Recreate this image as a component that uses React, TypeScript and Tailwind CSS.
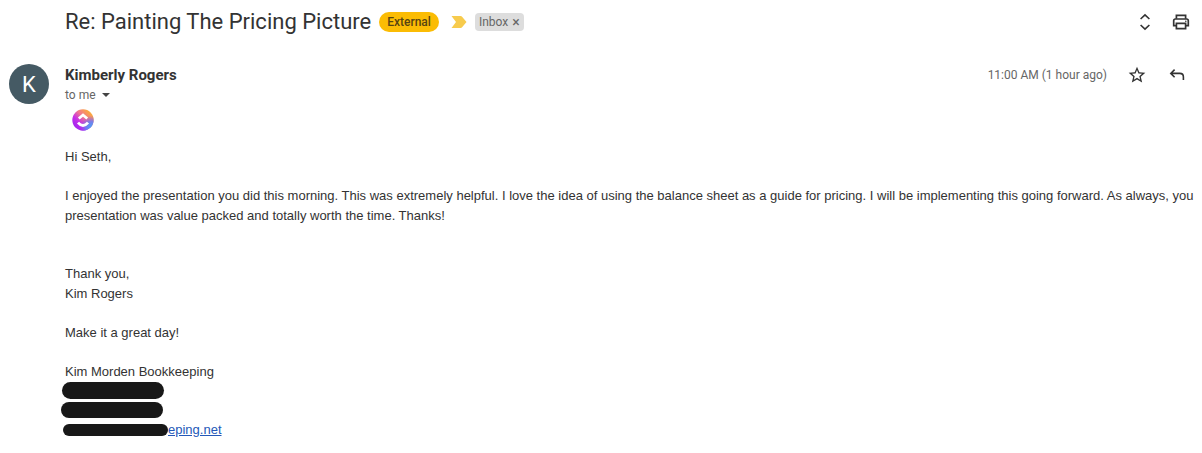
import { useState } from 'react'

const sans = "font-['Roboto','Liberation_Sans',sans-serif]"

const ImportantMarker = () => (
  <svg className="h-3 w-4 shrink-0" viewBox="0 0 16 12" fill="#f7cb4d" aria-hidden="true">
    <path d="M0.5 0H9.5Q10.6 0 11.3 0.9L15.5 6L11.3 11.1Q10.6 12 9.5 12H0.5L5 6Z" />
  </svg>
)

const ExpandIcon = () => (
  <svg className="h-5 w-5" viewBox="0 0 20 20" fill="none" stroke="#333" strokeWidth="1.6">
    <path d="M5.6 7L10 2.8L14.4 7M5.6 13L10 17.2L14.4 13" />
  </svg>
)

const PrintIcon = () => (
  <svg className="h-5 w-5" viewBox="0 0 20 20" fill="none" stroke="#333" strokeWidth="1.7">
    <path d="M5.4 6.7V3.4H14.6V6.7" />
    <path d="M5.4 13.6H2.7V8.7Q2.7 7 4.4 7H15.6Q17.3 7 17.3 8.7V13.6H14.6" />
    <path d="M5.4 11.4H14.6V16.6H5.4Z" />
    <circle cx="14.8" cy="9.2" r="0.8" fill="#333" stroke="none" />
  </svg>
)

const StarIcon = () => (
  <svg className="h-5 w-5" viewBox="0 0 24 24" fill="#333">
    <path d="M22 9.24l-7.19-.62L12 2 9.19 8.63 2 9.24l5.46 4.73L5.82 21 12 17.27 18.18 21l-1.63-7.03L22 9.24zM12 15.4l-3.76 2.27 1-4.28-3.32-2.88 4.38-.38L12 6.1l1.71 4.04 4.38.38-3.32 2.88 1 4.28L12 15.4z" />
  </svg>
)

const ReplyIcon = () => (
  <svg className="h-5 w-5" viewBox="0 0 20 20" fill="none" stroke="#333" strokeWidth="1.6">
    <path d="M7.6 4.6L3.8 8.4L7.6 12.2M3.8 8.4H12.8Q16.4 8.4 16.4 12V15" />
  </svg>
)

const ClickUpLogo = () => (
  <svg className="h-[22px] w-[22px]" viewBox="0 0 22 22">
    <defs>
      <linearGradient id="ring-left" x1="0" y1="1" x2="0.9" y2="0.1">
        <stop offset="0" stopColor="#8b1cf5" />
        <stop offset="0.4" stopColor="#c52fe8" />
        <stop offset="0.65" stopColor="#f2788d" />
        <stop offset="1" stopColor="#fdb52c" />
      </linearGradient>
      <radialGradient id="ring-right" cx="0.9" cy="0.85" r="0.55">
        <stop offset="0" stopColor="#45a5f7" />
        <stop offset="0.5" stopColor="#6c7df5" stopOpacity="0.9" />
        <stop offset="1" stopColor="#8b4cf5" stopOpacity="0" />
      </radialGradient>
    </defs>
    <circle cx="11" cy="11" r="10.7" fill="url(#ring-left)" />
    <circle cx="11" cy="11" r="10.7" fill="url(#ring-right)" />
    <path d="M6.8 9.6L11 5.9L15.2 9.6" fill="none" stroke="#fff" strokeWidth="2.6" />
    <path d="M6 13.6Q11 19.4 16 13.6" fill="none" stroke="#fff" strokeWidth="2.8" />
  </svg>
)

// A blank line between paragraphs
const Gap = () => <div className="h-[19px]" />

export default function App() {
  const [labelled, setLabelled] = useState(true)

  return (
    <main className={`bg-white pt-2 text-[#333] ${sans}`}>
      <header className="flex h-7 items-center pr-[11px] pl-[65px]">
        <h1 className="text-[22px] leading-7 whitespace-nowrap">Re: Painting The Pricing Picture</h1>
        <span className="ml-2 flex h-5 items-center rounded-full bg-[#fbbc04] px-2 text-[12px] font-medium text-[#574412]">
          External
        </span>
        <span className="ml-3 flex">
          <ImportantMarker />
        </span>
        {labelled && (
          <span className="ml-2 flex h-[18px] items-center gap-1 rounded bg-[#dddddd] px-1 text-[12px] text-[#666]">
            Inbox
            <button type="button" aria-label="Remove label Inbox" className="text-[14px]" onClick={() => setLabelled(false)}>
              ×
            </button>
          </span>
        )}
        <div className="ml-auto flex gap-4">
          <button type="button" aria-label="Expand all"><ExpandIcon /></button>
          <button type="button" aria-label="Print all"><PrintIcon /></button>
        </div>
      </header>

      <article className="mt-7 flex">
        <div className="w-[65px] shrink-0 pl-[9px]">
          <div className="flex h-10 w-10 items-center justify-center rounded-full bg-[#455a64] text-[22px] text-white">
            K
          </div>
        </div>
        <div className="min-w-0 flex-1">
          <div className="flex h-[22px] items-center pr-[15px]">
            <h2 className="text-[15px] font-bold">Kimberly Rogers</h2>
            <time className="ml-auto text-[12px] text-[#666]">11:00 AM (1 hour ago)</time>
            <button type="button" aria-label="Star" className="ml-5"><StarIcon /></button>
            <button type="button" aria-label="Reply" className="ml-5"><ReplyIcon /></button>
          </div>
          <button type="button" className="flex h-[18px] items-center gap-1.5 text-[12px] text-[#666]">
            to me
            <svg className="h-1 w-2" viewBox="0 0 8 4" fill="#444">
              <path d="M0 0H8L4 4Z" />
            </svg>
          </button>
          <div className="mt-[5px] flex pl-[7px]">
            <ClickUpLogo />
          </div>

          <div className="mt-4 pr-1 font-['Liberation_Sans',Arial,sans-serif] text-[13px] leading-5">
            <p>Hi Seth,</p>
            <Gap />
            <p>
              I enjoyed the presentation you did this morning. This was extremely helpful. I love the idea of using
              the balance sheet as a guide for pricing. I will be implementing this going forward. As always, you
              presentation was value packed and totally worth the time. Thanks!
            </p>
            <Gap />
            <Gap />
            <p>Thank you,</p>
            <p>Kim Rogers</p>
            <Gap />
            <p>Make it a great day!</p>
            <Gap />
            <p>Kim Morden Bookkeeping</p>
            <div className="-ml-1 flex flex-col items-start gap-[3px] pb-0.5">
              <span className="ml-px h-[17px] w-[102px] rounded-full bg-[#181818]" />
              <span className="h-4 w-[102px] rounded-full bg-[#181818]" />
            </div>
            <p className="flex items-center">
              <span className="-ml-0.5 h-3 w-[105px] rounded-full bg-[#181818]" />
              <a href="#website" className="text-[#2458b8] underline">eping.net</a>
            </p>
          </div>
        </div>
      </article>
    </main>
  )
}
